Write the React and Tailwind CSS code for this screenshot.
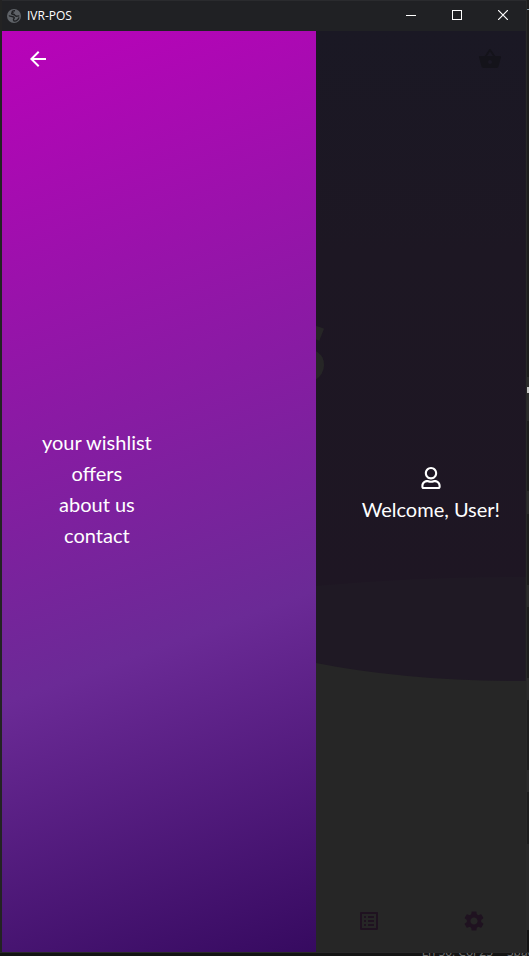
import React from "react";
import {
  MdArrowBack,
  MdShoppingBasket,
  MdListAlt,
  MdSettings,
} from "react-icons/md";
import { FaRegUser } from "react-icons/fa";

const links = ["your wishlist", "offers", "about us", "contact"];

function GlobeIcon() {
  return (
    <svg viewBox="0 0 14 14" className="size-3.5" aria-hidden="true">
      <circle cx="7" cy="7" r="7" fill="#5f6368" />
      <path
        d="M8 1.8C5.6 1.6 4.6 2.8 5.6 3.6C4.4 3.6 4.4 4.8 5.2 5.2C6 5.7 7.4 5.2 7.8 6.1C8.3 7 9.2 7.4 10.2 7.1L12.3 6.9"
        fill="none"
        stroke="#202124"
        strokeWidth="1.4"
      />
      <path
        d="M1.8 6.9C3.2 6.6 4.4 7.6 5.8 7.8C7.4 8 7.6 9 6.8 9.8C6.2 10.4 6.4 11.4 7.2 12.1C9.4 12 11.4 10.6 12 8.4"
        fill="none"
        stroke="#202124"
        strokeWidth="1.4"
      />
    </svg>
  );
}

function TitleBar() {
  return (
    <header className="flex h-[31px] shrink-0 items-start justify-between border-t border-[#2a2b2e] bg-[#202124] pl-[5px] text-white">
      <div className="flex h-[30px] items-center gap-1.5">
        <GlobeIcon />
        <h1 className="font-['Open_Sans',sans-serif] text-xs leading-4">IVR-POS</h1>
      </div>
      <div className="flex">
        <button aria-label="Minimize" className="flex h-7 w-[46px] items-center justify-center">
          <svg viewBox="0 0 10 10" className="size-2.5" shapeRendering="crispEdges">
            <path d="M0 5.5H10" stroke="currentColor" />
          </svg>
        </button>
        <button aria-label="Maximize" className="flex h-7 w-[46px] items-center justify-center">
          <svg viewBox="0 0 10 10" className="size-2.5" shapeRendering="crispEdges">
            <path d="M.5 .5H9.5V9.5H.5Z" fill="none" stroke="currentColor" />
          </svg>
        </button>
        <button aria-label="Close" className="flex h-7 w-[46px] items-center justify-center">
          <svg viewBox="0 0 10 10" className="size-2.5">
            <path d="M0 0L10 10M10 0L0 10" stroke="currentColor" strokeWidth="1.2" />
          </svg>
        </button>
      </div>
    </header>
  );
}

function Drawer() {
  return (
    <nav className="flex w-3/5 flex-col bg-[linear-gradient(160deg,#b902b9_0%,#6b2a96_65%,#360a60_100%)]">
      <button aria-label="Back" className="ml-6 mt-4 self-start text-white">
        <MdArrowBack className="size-6" />
      </button>
      <ul className="my-auto ml-10 flex flex-col items-center self-start pb-[45px] text-xl leading-[31px] text-white">
        {links.map((label) => (
          <li key={label}>
            <a href="#">{label}</a>
          </li>
        ))}
      </ul>
    </nav>
  );
}

function Home() {
  return (
    <main className="relative isolate flex flex-1 flex-col overflow-hidden bg-[#262626]">
      <svg
        viewBox="0 0 210 921"
        preserveAspectRatio="none"
        className="absolute inset-0 -z-10 size-full"
        aria-hidden="true"
      >
        <defs>
          <linearGradient id="dusk" x1="0" y1="0" x2="0" y2="1">
            <stop offset="0" stopColor="#1a1824" />
            <stop offset="0.4" stopColor="#1d1723" />
            <stop offset="1" stopColor="#1e1623" />
          </linearGradient>
        </defs>
        <path d="M0 0H210V650Q90 650 0 632Z" fill="#1f1924" />
        <path d="M0 0H210V546Q100 546 0 555Z" fill="url(#dusk)" />
      </svg>
      <span
        aria-hidden="true"
        className="absolute -left-9 top-[272px] -z-10 font-['Open_Sans',sans-serif] text-[80px] font-extrabold leading-[96px] text-[#262626]"
      >
        S
      </span>
      <button aria-label="Basket" className="mr-6 mt-4 self-end text-[#14131a]">
        <MdShoppingBasket className="size-6" />
      </button>
      <div className="my-auto flex flex-col items-center self-end pr-[26px] pt-4 text-white">
        <FaRegUser className="size-[22px]" />
        <p className="whitespace-nowrap text-xl leading-10">Welcome, User!</p>
      </div>
      <div className="mb-[19px] flex items-center justify-around text-[#1f1220]">
        <button aria-label="Orders">
          <MdListAlt className="size-6" />
        </button>
        <button aria-label="Settings">
          <MdSettings className="size-6" />
        </button>
      </div>
    </main>
  );
}

function EditorEdge() {
  return (
    <aside className="flex w-[3px] shrink-0 flex-col overflow-hidden border-l border-[#292929] bg-[#1d1d1d]">
      <div className="h-[377px] shrink-0 overflow-hidden pt-1 font-['Open_Sans',sans-serif] text-xs leading-5 text-[#aaaaaa]">T</div>
      <div className="flex h-11 shrink-0 flex-col bg-[#2b2b2b] pt-2.5">
        <div className="h-1.5 bg-[#c4c4c4]" />
      </div>
      <div className="mt-[70px] h-[23px] shrink-0 bg-[#2b2b2b]" />
      <div className="mt-[71px] h-[22px] shrink-0 bg-[#2b2b2b]" />
      <div className="mt-[71px] h-[22px] shrink-0 bg-[#2b2b2b]" />
      <div className="mt-[70px] h-[22px] shrink-0 bg-[#2b2b2b]" />
      <div className="mt-[52px] h-[86px] shrink-0 bg-[#282828]" />
      <div className="flex-1 bg-[#141414]" />
    </aside>
  );
}

export default function App() {
  return (
    <div className="flex h-screen flex-col overflow-hidden bg-[#141414] font-['Lato',sans-serif]">
      <div className="flex min-h-0 flex-1">
        <div className="flex min-w-0 flex-1 flex-col border-l-2 border-[#232323]">
          <TitleBar />
          <div className="flex min-h-0 flex-1">
            <Drawer />
            <Home />
          </div>
        </div>
        <EditorEdge />
      </div>
      <footer className="flex h-1 shrink-0 items-end justify-end gap-3.5 overflow-hidden border-t border-[#292929] font-['Open_Sans',sans-serif] text-xs leading-2 text-[#707070]">
        <span className="whitespace-nowrap">Ln 50, Col 25</span>
        <span className="w-[22px] overflow-hidden whitespace-nowrap">Spaces</span>
      </footer>
    </div>
  );
}
